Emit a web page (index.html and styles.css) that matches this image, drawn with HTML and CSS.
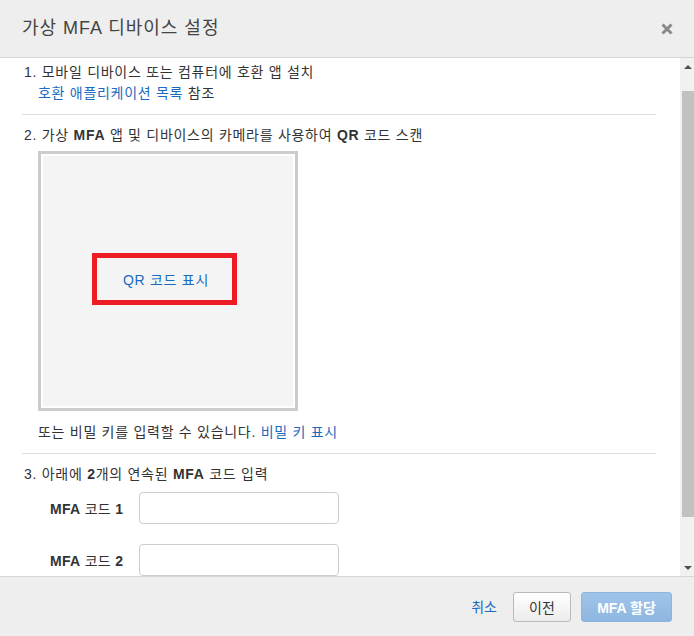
FILE: index.html
```html
<!DOCTYPE html>
<html lang="ko">
<head>
<meta charset="utf-8">
<title>가상 MFA 디바이스 설정</title>
<link rel="stylesheet" href="styles.css">
</head>
<body>
<div class="modal">
  <div class="modal-header">
    <h1 class="modal-title">가상 MFA 디바이스 설정</h1>
    <span class="close-btn" aria-label="닫기">
      <svg width="12" height="12" viewBox="0 0 12 12"><path d="M1.5 1.5 L10.5 10.5 M10.5 1.5 L1.5 10.5" stroke="#8a8a8a" stroke-width="3" stroke-linecap="butt"/></svg>
    </span>
  </div>
  <div class="modal-body">
    <div class="content">
      <div class="step step-1">
        <p class="step-title">1. 모바일 디바이스 또는 컴퓨터에 호환 앱 설치</p>
        <p class="step-sub"><a class="link" href="#">호환 애플리케이션 목록</a> 참조</p>
      </div>
      <hr class="sep">
      <div class="step step-2">
        <p class="step-title">2. 가상 <b>MFA</b> 앱 및 디바이스의 카메라를 사용하여 <b>QR</b> 코드 스캔</p>
        <div class="qr-box">
          <div class="qr-inner">
            <a class="qr-link" href="#">QR 코드 표시</a>
          </div>
        </div>
        <p class="secret">또는 비밀 키를 입력할 수 있습니다. <a class="link" href="#">비밀 키 표시</a></p>
      </div>
      <hr class="sep">
      <div class="step step-3">
        <p class="step-title">3. 아래에 <b>2</b>개의 연속된 <b>MFA</b> 코드 입력</p>
        <div class="field">
          <label class="field-label"><b>MFA</b> 코드 <b>1</b></label>
          <input class="field-input" type="text">
        </div>
        <div class="field">
          <label class="field-label"><b>MFA</b> 코드 <b>2</b></label>
          <input class="field-input" type="text">
        </div>
      </div>
    </div>
    <div class="scrollbar">
      <div class="sb-btn"><span class="tri-up"></span></div>
      <div class="sb-track"><div class="sb-thumb"></div></div>
      <div class="sb-btn"><span class="tri-down"></span></div>
    </div>
  </div>
  <div class="modal-footer">
    <a class="cancel" href="#">취소</a>
    <button class="btn btn-prev" type="button">이전</button>
    <button class="btn btn-primary" type="button">MFA 할당</button>
  </div>
</div>
</body>
</html>
```
FILE: styles.css
```css
* { box-sizing: border-box; }
html, body {
  margin: 0;
  padding: 0;
  width: 694px;
  height: 636px;
  overflow: hidden;
  background: #ffffff;
  font-family: "Liberation Sans", "Noto Sans CJK KR", sans-serif;
  font-size: 14px;
  color: #333333;
}
.modal {
  display: flex;
  flex-direction: column;
  height: 636px;
}
.modal-header {
  height: 58px;
  flex: none;
  background: #eeeeee;
  border-bottom: 1px solid #d5d5d5;
  display: flex;
  align-items: center;
  justify-content: space-between;
  padding: 0 21px 0 22px;
}
.modal-title {
  margin: 0;
  font-size: 18px;
  font-weight: normal;
  color: #444444;
  line-height: 24px;
  padding-bottom: 1px;
  letter-spacing: 1px;
}
.close-btn {
  display: flex;
  width: 12px;
  height: 12px;
}
.modal-body {
  height: 518px;
  flex: none;
  display: flex;
  overflow: hidden;
}
.content {
  flex: 1;
  padding: 0 24px 0 22px;
  overflow: hidden;
  letter-spacing: 0.72px;
}
p { margin: 0; }
.step-1 { padding: 4px 0 10px 2px; }
.step-1 .step-title, .step-sub { line-height: 21px; }
.step-sub { padding-left: 14px; }
.sep {
  margin: 0;
  border: 0;
  border-top: 1px solid #dddddd;
  height: 0;
}
.step-title { line-height: 20px; }
.step-2 { padding: 10px 0 11px 2px; }
.link { color: #1a6bbf; text-decoration: none; }
.qr-box {
  margin: 6px 0 0 14px;
  width: 260px;
  height: 260px;
  border: 3px solid #cccccc;
  padding: 2px;
  background: #ffffff;
}
.qr-inner {
  width: 100%;
  height: 100%;
  background: #f4f4f4;
  display: flex;
  align-items: center;
  justify-content: center;
  padding: 0 8px 4px 0;
}
.qr-link {
  width: 145px;
  height: 52px;
  border: 5px solid #ed1c24;
  display: flex;
  align-items: center;
  justify-content: center;
  color: #1a6bbf;
  text-decoration: none;
  font-size: 14px;
  padding-left: 4px;
}
.secret {
  margin: 11px 0 0 14px;
  line-height: 20px;
}
.step-3 { padding: 10px 0 0 2px; }
.field {
  display: flex;
  align-items: center;
  margin-top: 8px;
  padding-left: 26px;
}
.field + .field { margin-top: 20px; }
.field-label {
  width: 89px;
  flex: none;
  color: #333333;
  letter-spacing: 0.3px;
}
.field-input {
  width: 200px;
  height: 32px;
  border: 1px solid #cccccc;
  border-radius: 4px;
  background: #ffffff;
  margin: 0;
  padding: 0 8px;
  font: inherit;
}
.scrollbar {
  width: 14px;
  flex: none;
  background: #f1f1f1;
  display: flex;
  flex-direction: column;
}
.sb-btn {
  height: 17px;
  flex: none;
  display: flex;
  align-items: center;
  justify-content: center;
  padding-left: 2px;
}
.tri-up, .tri-down {
  width: 0;
  height: 0;
  border-left: 4px solid transparent;
  border-right: 4px solid transparent;
}
.tri-up { border-bottom: 4px solid #505050; }
.tri-down { border-top: 4px solid #505050; }
.sb-track {
  flex: 1;
  padding: 16px 0 0 2px;
}
.sb-thumb {
  height: 426px;
  background: #c1c1c1;
}
.modal-footer {
  height: 60px;
  flex: none;
  background: #eeeeee;
  border-top: 1px solid #d5d5d5;
  display: flex;
  align-items: flex-start;
  justify-content: flex-end;
  padding: 15px 22px 0 0;
}
.cancel {
  color: #1a6bbf;
  text-decoration: none;
  line-height: 30px;
  margin-right: 16px;
}
.btn {
  height: 30px;
  border-radius: 3px;
  font-family: inherit;
  font-size: 14px;
  padding: 0;
  margin: 0;
}
.btn-prev {
  width: 58px;
  border: 1px solid #b9b9b9;
  background: linear-gradient(#ffffff, #ececec);
  color: #333333;
  margin-right: 10px;
}
.btn-primary {
  width: 91px;
  border: 1px solid #8db4dd;
  background: linear-gradient(#a0c4ea, #8eb6e0);
  color: #ffffff;
  font-weight: bold;
}
```
